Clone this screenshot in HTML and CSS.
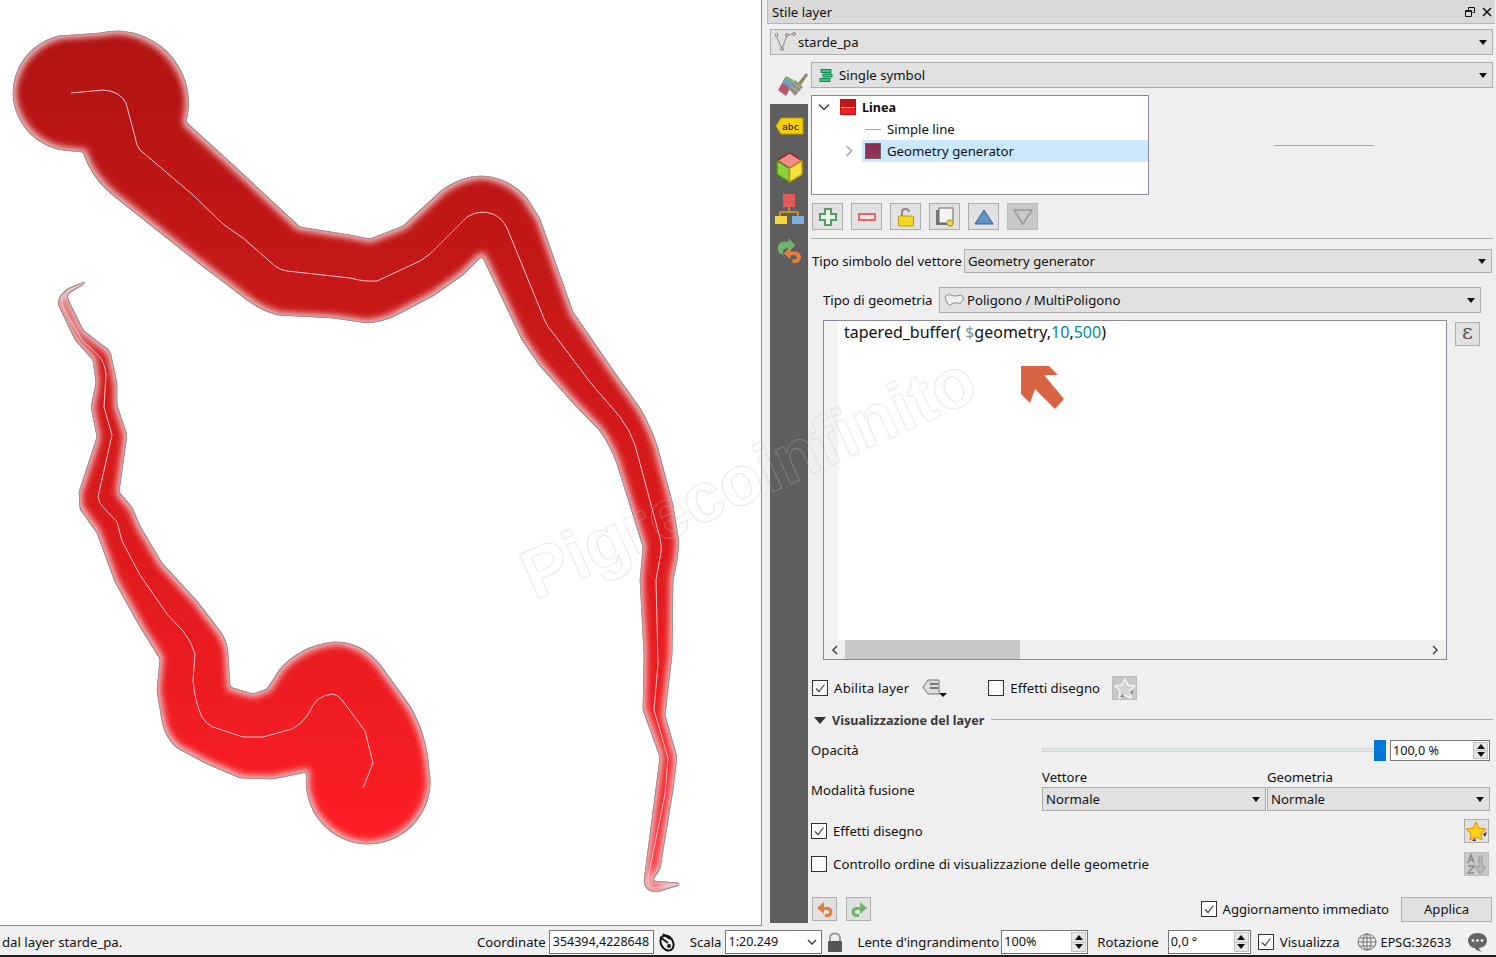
FILE: index.html
```html
<!DOCTYPE html>
<html>
<head>
    <meta charset="utf-8">
    <title>Stile layer</title>
    <link rel="stylesheet" href="styles.css">
</head>
<body>
    <div class="main">
        <div class="map">
            <svg class="mapCanvas" width="761" height="925" viewBox="0 0 761 925">
                <defs>
                    <linearGradient id="ramp" gradientUnits="userSpaceOnUse" x1="0" y1="33" x2="0" y2="846">
                        <stop offset="0" stop-color="#b21414"/>
                        <stop offset="0.33" stop-color="#c81919"/>
                        <stop offset="0.65" stop-color="#e01b1e"/>
                        <stop offset="1" stop-color="#ff1f26"/>
                    </linearGradient>
                    <filter id="feather" filterUnits="userSpaceOnUse" x="0" y="0" width="761" height="925" color-interpolation-filters="sRGB">
                        <feGaussianBlur in="SourceAlpha" stdDeviation="1.5" result="soft"/>
                        <feComponentTransfer in="soft" result="shape">
                            <feFuncA type="linear" slope="6" intercept="-1.8"/>
                        </feComponentTransfer>
                        <feFlood flood-color="#f2c0c2" result="pale"/>
                        <feComposite in="pale" in2="shape" operator="in" result="base"/>
                        <feMorphology in="SourceGraphic" operator="erode" radius="3" result="thin"/>
                        <feGaussianBlur in="thin" stdDeviation="3" result="coreSoft"/>
                        <feComposite in="coreSoft" in2="shape" operator="in" result="core"/>
                        <feMorphology in="shape" operator="erode" radius="0.7" result="inner"/>
                        <feFlood flood-color="#a98f92" result="gray"/>
                        <feComposite in="gray" in2="shape" operator="in" result="grayShape"/>
                        <feComposite in="grayShape" in2="inner" operator="out" result="edge"/>
                        <feMerge>
                            <feMergeNode in="base"/>
                            <feMergeNode in="core"/>
                            <feMergeNode in="edge"/>
                        </feMerge>
                    </filter>
                </defs>
                <path class="buffers" filter="url(#feather)" d="M72 151 A59 59 0 0 1 13 93 A59 59 0 0 1 58 36 L100 33 A72 72 0 0 1 186 122 L230 162 L273 202 L300 227 L350 235 L370 239 L403 226 L443 189 Q463 176 480 176 Q507 176 527 198 L540 219 L573 312 L613 370 L640 408 Q650 425 657 445 L673 505 L679 543 L677 561 L673 580 L672 655 L665 715 L677 757 L673 790 L660 869 L652 881 L680 883 L680 885 L657 892 Q645 892 644 881 L660 757 L643 710 L644 655 L640 580 L643 547 L633 515 L617 464 Q610 445 600 431 L573 403 L540 366 L522 340 L482 256 L463 275 L433 296 L393 317 Q380 322 367 323 L333 318 L277 315 Q260 310 247 300 L197 262 L110 193 Q90 175 83 152 Z
                    M86 281 L86 283 L69 293 L67 297 L83 330 L102 345 Q112 350 112 360 L117 383 L117 405 L127 435 L119 492 L132 507 L140 526 L162 563 L197 601 L217 627 Q228 640 228 654 L230 687 L253 694 L267 689 L280 669 Q300 646 333 642 Q365 640 387 674 L410 706 Q427 735 429 770 A62 62 0 1 1 307 772 L273 779 L240 778 L207 764 L177 748 Q165 738 162 721 L157 691 L160 659 L140 627 L115 582 L97 533 L80 509 L79 492 L97 437 L91 407 L96 383 L93 360 L75 340 L58 304 L60 296 L67 289 Z"/>
                <path class="road" d="M71 93 L103 90 Q120 91 126 103 L135 137 Q136 145 140 150 L193 195 L223 224 L243 238 L275 266 Q280 270 287 271 L350 278 Q365 282 377 281 L420 261 L430 254 L467 217 Q480 209 493 214 Q502 218 507 228 L545 321 Q548 328 553 333 L590 382 L620 417 Q630 430 635 445 L660 538 Q662 546 661 552 L656 580 L658 664 L654 710 L668 758 L665 794 L648 878 Q648 888 654 888 L680 884"/>
                <path class="road" d="M86 282 L68 291 Q60 296 62 300 Q62 306 65 311 L82 340 L98 355 Q105 362 106 375 L104 407 L112 435 L98 497 Q99 503 103 507 L117 522 L122 541 L140 575 L167 614 L183 631 Q192 642 195 654 L193 680 Q195 703 202 717 Q206 724 213 727 L243 737 L263 737 L292 729 Q300 725 307 716 Q312 706 317 700 Q325 694 333 694 Q338 695 342 700 L365 731 L373 763 L363 788"/>
            </svg>
        </div>

        <div class="panel">
            <div class="titleBar">
                <span>Stile layer</span>
                <span class="titleIcons">
                    <svg width="10" height="10" viewBox="0 0 10 10"><path d="M3.500 .5h6v5h-2M.5 3.500h6v6h-6z M3.500 .5v3M.5 4.500h6" class="blackLine"/></svg>
                    <svg width="10" height="10" viewBox="0 0 10 10"><path d="M1 1l8 8M9 1l-8 8" class="blackThick"/></svg>
                </span>
            </div>

            <div class="combo layerCombo">
                <svg class="comboIcon" width="21" height="20" viewBox="0 0 21 20"><path d="M1 3l6 14 5-14 7-1" class="grayLine"/><circle cx="1.500" cy="3" r="1.400" class="grayDot"/><circle cx="7" cy="17" r="1.400" class="grayDot"/><circle cx="12" cy="3" r="1.400" class="grayDot"/><circle cx="19" cy="2" r="1.400" class="grayDot"/></svg>
                starde_pa
            </div>

            <div class="body">
                <div class="side">
                    <div class="brushBox">
                        <svg width="32" height="26" viewBox="0 0 32 26">
                            <path d="M1 19L8 7l8 5-7 13z" fill="#b9586c"/>
                            <path d="M5 12l3-5 9 5-3 5z" fill="#6f9fcf"/>
                            <path d="M7 8l2-3 8 4-2 3z" fill="#79b56f"/>
                            <path d="M11 17l7-8 8 7-8 9z" fill="#8f9488"/>
                            <path d="M14 15l7 6M17 12l7 6" stroke="#b5b8ae"/>
                            <path d="M21 12l8-10 2 2-7 10z" fill="#8f8a5e"/>
                        </svg>
                    </div>
                    <div class="strip">
                        <svg class="tag" width="29" height="18" viewBox="0 0 29 18"><path d="M1 9l5-8h22v16H6z" fill="#f7d000" stroke="#b99b00"/><text x="7" y="13" class="abc">abc</text></svg>
                        <svg class="cube" width="29" height="31" viewBox="0 0 30 32"><path d="M15 1L28 9 15 17 2 9z" fill="#f08c8c" stroke="#a81818" stroke-width="1.500"/><path d="M2 9l13 8v14L2 23z" fill="#8fd13a" stroke="#4f8a18" stroke-width="1.500"/><path d="M28 9l-13 8v14l13-8z" fill="#f7df40" stroke="#b39a10" stroke-width="1.500"/></svg>
                        <svg class="tree" width="31" height="31" viewBox="0 0 31 31"><path d="M15 13v5M6 18h18M6 18v4M24 18v4" stroke="#c98a30" stroke-width="2" fill="none"/><rect x="9" y="0" width="12" height="13" fill="#e05a5a"/><path d="M1 22h12v8H1z" fill="#f4d83a"/><path d="M18 22h12v8H18z" fill="#7fb0e0"/></svg>
                        <svg class="swap" width="27" height="27" viewBox="0 0 28 28"><path d="M13 1v4H8C4 5 2 8 2 12s2 6 6 6c-1-2-1-6 2-6h3v4l7-7.500z" fill="#6fb36f"/><path d="M15 11v4h5c3 0 6 3 6 6s-3 6-6 6h-3v-4h3c2 0 2-4 0-4h-5v4l-7-6z" fill="#e67e3c"/></svg>
                    </div>
                </div>

                <div class="content">
                    <div class="combo rendererCombo">
                        <svg class="comboIcon" width="14" height="15" viewBox="0 0 14 15"><path d="M2 1.500h10v3H2zM4 6h9v3H4zM1 10.500h10v3H1z" fill="#4fbf8a" stroke="#0a8a50"/></svg>
                        Single symbol
                    </div>

                    <div class="symbolRow">
                        <div class="symbolTree">
                            <div class="treeRow">
                                <svg class="chevron chevronOne" width="12" height="8" viewBox="0 0 12 8"><path d="M1 1.500l5 5 5-5" class="darkLine"/></svg>
                                <span class="swatch swatchLine"></span>
                                <b>Linea</b>
                            </div>
                            <div class="treeRow treeChild">
                                <span class="miniLine"></span>
                                <span>Simple line</span>
                            </div>
                            <div class="treeRow treeGen">
                                <svg class="chevron chevronTwo" width="8" height="12" viewBox="0 0 8 12"><path d="M1.500 1l5 5-5 5" class="greyChevron"/></svg>
                                <div class="treeSelected">
                                    <span class="swatch swatchGen"></span>
                                    <span>Geometry generator</span>
                                </div>
                            </div>
                        </div>
                        <div class="preview"><span class="previewLine"></span></div>
                    </div>

                    <div class="toolRow">
                        <button class="tool wide">
                            <svg width="20" height="20" viewBox="0 0 20 20"><path d="M7 2h6v5h5v6h-5v5H7v-5H2V7h5z" fill="#e8f3e8" stroke="#5a9a63" stroke-width="2"/></svg>
                        </button>
                        <button class="tool wide">
                            <svg width="20" height="10" viewBox="0 0 20 10"><rect x="2" y="2" width="16" height="6" fill="#fbe2e2" stroke="#e2686c" stroke-width="2"/></svg>
                        </button>
                        <button class="tool wide">
                            <svg width="18" height="20" viewBox="0 0 18 20"><path d="M5 9V5c0-4 7-4 7 0" fill="none" stroke="#8a8a8a" stroke-width="2"/><rect x="1.500" y="9" width="15" height="10" rx="1" fill="#f1d71f" stroke="#b79a12"/></svg>
                        </button>
                        <button class="tool wide">
                            <svg width="20" height="20" viewBox="0 0 20 20"><rect x="1" y="3" width="13" height="15" fill="#777"/><rect x="4" y="1" width="14" height="15" fill="#f4f4f4" stroke="#6b6b6b"/><circle cx="15" cy="16" r="3.200" fill="#e8d24a" stroke="#a8922a"/></svg>
                        </button>
                        <button class="tool wide">
                            <svg width="20" height="16" viewBox="0 0 20 16"><path d="M10 1l9 14H1z" fill="#6594c9" stroke="#2f5f92"/></svg>
                        </button>
                        <button class="tool wide toolOff">
                            <svg width="20" height="16" viewBox="0 0 20 16"><path d="M1 1h18l-9 14z" fill="#c8c8c8" stroke="#9a9a9a" stroke-width="1.500"/></svg>
                        </button>
                    </div>

                    <hr class="rule">

                    <div class="typeRow">
                        <span class="typeLabel">Tipo simbolo del vettore</span>
                        <div class="combo typeCombo">Geometry generator</div>
                    </div>

                    <div class="geomRow">
                        <span class="geomLabel">Tipo di geometria</span>
                        <div class="combo geomCombo">
                            <svg class="polyIcon" width="21" height="14" viewBox="0 0 21 14"><path d="M2 3c3-3 5 0 9 0s7-2 8 1-1 5-3 6-3-1-6 0-5 3-6 1-4-5-2-8z" fill="#eee" stroke="#8a8a8a"/></svg>
                            Poligono / MultiPoligono
                        </div>
                    </div>

                    <div class="editorRow">
                        <div class="editor">
                            <div class="editorBody">
                                <div class="editorMargin"></div>
                                <div class="code">tapered_buffer( <span class="codeVar">$</span>geometry,<span class="codeNum">10</span>,<span class="codeNum">500</span>)</div>
                                <svg class="arrow" width="44" height="44" viewBox="0 0 44 44"><path d="M1 1H29L38 10H24L44 34L35 44L15 24L10 38L1 29Z" fill="#d96444"/></svg>
                            </div>
                            <div class="hScroll">
                                <svg class="scrollArrow" width="7" height="10" viewBox="0 0 7 10"><path d="M6 1L2 5l4 4" class="darkLine"/></svg>
                                <div class="thumb"></div>
                                <svg class="scrollArrow arrowRight" width="7" height="10" viewBox="0 0 7 10"><path d="M1 1l4 4-4 4" class="darkLine"/></svg>
                            </div>
                        </div>
                        <button class="tool small epsilon">&#949;</button>
                    </div>

                    <div class="layerRow">
                        <span class="check"><svg width="14" height="14" viewBox="0 0 14 14"><path d="M3 7.500l3 3 5.500-7" class="tick"/></svg></span>
                        <span class="checkLabel enableLabel">Abilita layer</span>
                        <svg class="legendIcon" width="26" height="20" viewBox="0 0 26 20"><path d="M6 2h11v14H6L1 9z" fill="#dcdcdc" stroke="#777"/><path d="M8 6h8M8 10h8" stroke="#555" stroke-width="1.500"/><path d="M17 15h8l-4 4z" fill="#111"/></svg>
                        <span class="check"></span>
                        <span class="checkLabel">Effetti disegno</span>
                        <button class="tool small toolOff starOff">
                            <svg width="22" height="22" viewBox="0 0 22 22"><path d="M11 2l3 6 7 1-5 5 1 7-6-3-6 3 1-7-5-5 7-1z" fill="#d4d4d4" stroke="#f5f5f5" stroke-width="1.500"/><path d="M16 15l3-2-1 5zM6 20l3-3 1 3z" fill="#777"/></svg>
                        </button>
                    </div>

                    <div class="groupHead">
                        <span class="groupArrow"></span>
                        <b>Visualizzazione del layer</b>
                        <span class="groupLine"></span>
                    </div>

                    <div class="opacityRow">
                        <span class="formLabel">Opacità</span>
                        <div class="slider">
                            <span class="track"></span>
                            <span class="handle"></span>
                        </div>
                        <div class="spin opacitySpin">
                            <span class="spinValue">100,0 %</span>
                            <span class="spinBtns"><i class="up"></i><i class="down"></i></span>
                        </div>
                    </div>

                    <div class="blendRow">
                        <span class="formLabel">Modalità fusione</span>
                        <div class="blendCol blendVector">
                            <span>Vettore</span>
                            <div class="combo blendCombo">Normale</div>
                        </div>
                        <div class="blendCol blendGeom">
                            <span>Geometria</span>
                            <div class="combo blendCombo">Normale</div>
                        </div>
                    </div>

                    <div class="effectRow">
                        <span class="check"><svg width="14" height="14" viewBox="0 0 14 14"><path d="M3 7.500l3 3 5.500-7" class="tick"/></svg></span>
                        <span class="checkLabel">Effetti disegno</span>
                        <button class="tool small pushRight">
                            <svg width="22" height="22" viewBox="0 0 22 22"><path d="M10 2l3 6 7 1-5 5 1 6-6-3-6 3 1-6-5-5 7-1z" fill="#fcd116" stroke="#e88a10"/><path d="M17 14l4-2-2 5zM6 21l3-3 1 3z" fill="#333"/></svg>
                        </button>
                    </div>

                    <div class="orderRow">
                        <span class="check"></span>
                        <span class="checkLabel">Controllo ordine di visualizzazione delle geometrie</span>
                        <button class="tool small toolOff pushRight">
                            <svg width="22" height="22" viewBox="0 0 22 22"><path d="M2 10l3-8 3 8M3 7h4M2 13h6l-6 7h6" fill="none" stroke="#8a8a8a" stroke-width="1.500"/><path d="M13 3h3v11h4l-5.500 7L9 14h4z" fill="#bdbdbd" stroke="#9a9a9a"/></svg>
                        </button>
                    </div>

                    <div class="footerRow">
                        <button class="tool small">
                            <svg width="18" height="18" viewBox="0 0 18 18"><path d="M8 2L1 8l7 6v-4h3c3 0 3 4 0 4H9v3h3c6 0 6-10 0-10H8z" fill="#e67e3c"/></svg>
                        </button>
                        <button class="tool small">
                            <svg width="18" height="18" viewBox="0 0 18 18"><path d="M10 2l7 6-7 6v-4H7c-3 0-3 4 0 4h2v3H6C0 17 0 7 6 7h4z" fill="#6fb36f"/></svg>
                        </button>
                        <span class="check pushRight"><svg width="14" height="14" viewBox="0 0 14 14"><path d="M3 7.500l3 3 5.500-7" class="tick"/></svg></span>
                        <span class="checkLabel">Aggiornamento immediato</span>
                        <button class="applyBtn">Applica</button>
                    </div>
                </div>
            </div>
        </div>
    </div>

    <div class="statusBar">
        <span class="statusMsg">dal layer starde_pa.</span>
        <span>Coordinate</span>
        <div class="statusInput coordInput">354394,4228648</div>
        <svg class="mouseIcon" width="20" height="20" viewBox="0 0 20 20"><ellipse cx="10" cy="11" rx="6" ry="8" fill="#eee" stroke="#111" stroke-width="2" transform="rotate(-30 10 11)"/><path d="M3 5l8 6M6 2l7 5" stroke="#111" stroke-width="2"/><circle cx="12" cy="14" r="2" fill="#111"/></svg>
        <span class="scalaLabel">Scala</span>
        <div class="statusInput scaleInput">1:20.249
            <svg class="scaleChevron" width="10" height="6" viewBox="0 0 10 6"><path d="M1 1l4 4 4-4" class="darkLine"/></svg>
        </div>
        <svg class="lockIcon" width="16" height="20" viewBox="0 0 16 20"><path d="M3 9V6c0-6 10-6 10 0v3" fill="none" stroke="#999" stroke-width="2"/><rect x="1" y="9" width="14" height="11" rx="1" fill="#555"/></svg>
        <span class="lensLabel">Lente d'ingrandimento</span>
        <div class="spin lensSpin">
            <span class="spinValue">100%</span>
            <span class="spinBtns"><i class="up"></i><i class="down"></i></span>
        </div>
        <span class="rotLabel">Rotazione</span>
        <div class="spin rotSpin">
            <span class="spinValue">0,0 °</span>
            <span class="spinBtns"><i class="up"></i><i class="down"></i></span>
        </div>
        <span class="check statusCheck"><svg width="14" height="14" viewBox="0 0 14 14"><path d="M3 7.500l3 3 5.500-7" class="tick"/></svg></span>
        <span class="checkLabel">Visualizza</span>
        <svg class="globeIcon" width="20" height="18" viewBox="0 0 20 18"><g fill="none" stroke="#6f6f6f"><ellipse cx="10" cy="9" rx="9" ry="8"/><ellipse cx="10" cy="9" rx="4" ry="8"/><path d="M1 9h18M2.500 5h15M2.500 13h15M10 1v16"/></g></svg>
        <span class="epsgLabel">EPSG:32633</span>
        <svg class="chatIcon" width="21" height="20" viewBox="0 0 21 20"><path d="M10.500 1C16 1 20 4 20 8.500S16 16 12 16c0 1 1 2.500 3 3.500-3 0-6-1.500-7.500-3.500C4 15.500 1 12.500 1 8.500S5 1 10.500 1z" fill="#666"/><circle cx="6" cy="8.500" r="1.300" fill="#fff"/><circle cx="10.500" cy="8.500" r="1.300" fill="#fff"/><circle cx="15" cy="8.500" r="1.300" fill="#fff"/></svg>
    </div>

    <div class="watermark">Pigrecoinfinito</div>
</body>
</html>
```

FILE: styles.css
```css
* {
    box-sizing: border-box;
}

html, body {
    margin: 0;
    padding: 0;
}

body {
    width: 1496px;
    height: 957px;
    overflow: hidden;
    position: relative;
    background-color: #f0f0f0;
    font-family: "Noto Sans", "Open Sans", sans-serif;
    font-size: 13.200px;
    color: #111;
}

b {
    font-size: 12.600px;
}

svg {
    display: block;
    flex: none;
}

button {
    font-family: inherit;
    font-size: inherit;
    color: inherit;
    padding: 0;
}

.main {
    display: flex;
    height: 926px;
}

/* map canvas */
.map {
    width: 762px;
    height: 926px;
    flex: none;
    background-color: white;
    border-right: 1px solid #8a8a92;
    border-bottom: 1px solid #8a8a92;
}

.buffers {
    fill: url(#ramp);
}

.road {
    fill: none;
    stroke: #f8c6cc;
    stroke-width: 1;
    stroke-linejoin: round;
}

/* right panel */
.panel {
    flex: 1;
    display: flex;
    flex-direction: column;
    background-color: #efefef;
    min-width: 0;
}

.titleBar {
    height: 24px;
    flex: none;
    margin: 0 1px 0 5px;
    padding: 0 3px 0 4px;
    background-color: #d9d9d9;
    border-left: 1px solid #bdbdbd;
    border-bottom: 1px solid #b5b5b5;
    display: flex;
    align-items: center;
    justify-content: space-between;
}

.titleIcons {
    display: flex;
    gap: 7px;
}

.blackLine {
    fill: none;
    stroke: #111;
}

.blackThick {
    fill: none;
    stroke: #111;
    stroke-width: 1.600;
}

.grayLine {
    fill: none;
    stroke: #8a8a8a;
}

.grayDot {
    fill: #eee;
    stroke: #777;
}

.darkLine {
    fill: none;
    stroke: #444;
    stroke-width: 1.500;
}

.greyChevron {
    fill: none;
    stroke: #a8a8a8;
    stroke-width: 1.600;
}

.combo {
    position: relative;
    display: flex;
    align-items: center;
    background-color: #e1e1e1;
    border: 1px solid #adadad;
    padding-left: 3px;
}

.combo::after {
    content: "";
    position: absolute;
    right: 5px;
    top: 50%;
    margin-top: -2px;
    border-left: 4px solid transparent;
    border-right: 4px solid transparent;
    border-top: 5px solid #111;
}

.layerCombo {
    height: 26px;
    flex: none;
    margin: 5px 3px 0 8px;
    padding-left: 4px;
}

.comboIcon {
    margin-right: 2px;
}

.body {
    flex: 1;
    display: flex;
    margin: 7px 0 3px 8px;
    min-height: 0;
}

.side {
    width: 38px;
    flex: none;
    display: flex;
    flex-direction: column;
}

.brushBox {
    height: 42px;
    flex: none;
    padding: 9px 0 0 7px;
}

.strip {
    flex: 1;
    background-color: #5e5e5e;
    padding: 13px 0 0 4px;
}

.abc {
    font-family: "DejaVu Sans Mono", monospace;
    font-size: 9.500px;
    fill: #000;
}

.tag {
    margin-left: 1px;
}

.cube {
    margin: 17px 0 0 1px;
}

.tree {
    margin: 11px 0 0 0;
}

.swap {
    margin: 12px 0 0 2px;
}

.content {
    flex: 1;
    min-width: 0;
    margin: 0 3px;
    display: flex;
    flex-direction: column;
}

.rendererCombo {
    height: 26px;
    flex: none;
    padding-left: 7px;
}

.rendererCombo .comboIcon {
    margin-right: 6px;
}

.symbolRow {
    display: flex;
    height: 100px;
    flex: none;
    margin-top: 7px;
}

.symbolTree {
    width: 338px;
    flex: none;
    background-color: white;
    border: 1px solid #8a8a9a;
}

.preview {
    flex: 1;
    display: flex;
    align-items: center;
    justify-content: center;
}

.previewLine {
    display: block;
    width: 100px;
    height: 1px;
    margin-left: 6px;
    background-color: #ee8aa4;
}

.treeRow {
    height: 22px;
    display: flex;
    align-items: center;
}

.chevronOne {
    margin-left: 6px;
    margin-right: 10px;
}

.chevronTwo {
    margin-left: 33px;
    margin-right: 9px;
}

.swatch {
    display: block;
    width: 16px;
    height: 16px;
    flex: none;
    border: 1px solid #777;
}

.swatchLine {
    background: linear-gradient(#c41414 0 48%, #f4c4c4 48% 54%, #ee2020 54%);
    border-color: #c41414;
    margin-right: 6px;
}

.swatchGen {
    background: linear-gradient(#8a2c50, #96365a);
    border-color: #666;
    margin: 0 6px 0 3px;
}

.treeChild {
    padding-left: 53px;
}

.miniLine {
    display: block;
    width: 16px;
    height: 1px;
    background-color: #ee8aa4;
    margin-right: 6px;
}

.treeSelected {
    flex: 1;
    height: 22px;
    display: flex;
    align-items: center;
    background-color: #cce8ff;
}

.toolRow {
    display: flex;
    gap: 8px;
    height: 27px;
    flex: none;
    margin: 8px 0 0 1px;
}

.tool {
    display: flex;
    align-items: center;
    justify-content: center;
    background-color: #e1e1e1;
    border: 1px solid #adadad;
    border-radius: 0;
    flex: none;
}

.wide {
    width: 31px;
    height: 27px;
}

.small {
    width: 25px;
    height: 24px;
}

.toolOff {
    background-color: #c8c8c8;
    border-color: #bdbdbd;
}

.rule {
    margin: 8px 0 0 0;
    border: 0;
    border-top: 1px solid #adadad;
    flex: none;
}

.typeRow {
    display: flex;
    align-items: center;
    height: 24px;
    flex: none;
    margin-top: 10px;
    padding-left: 1px;
}

.typeLabel {
    width: 152px;
    flex: none;
    white-space: nowrap;
}

.typeCombo {
    flex: 1;
    height: 24px;
    margin-right: 1px;
}

.geomRow {
    display: flex;
    align-items: center;
    height: 26px;
    flex: none;
    margin-top: 14px;
    padding-left: 12px;
}

.geomLabel {
    width: 116px;
    flex: none;
    white-space: nowrap;
}

.geomCombo {
    flex: 1;
    height: 26px;
    margin-right: 12px;
    padding-left: 4px;
}

.polyIcon {
    margin-right: 2px;
}

.editorRow {
    display: flex;
    height: 340px;
    flex: none;
    margin-top: 7px;
    padding-left: 12px;
}

.editor {
    width: 624px;
    flex: none;
    display: flex;
    flex-direction: column;
    border: 1px solid #8a8a9a;
    background-color: white;
}

.editorBody {
    flex: 1;
    display: flex;
    position: relative;
    min-height: 0;
}

.editorMargin {
    width: 14px;
    flex: none;
    background-color: #f3f3f3;
}

.code {
    margin-left: 6px;
    font-size: 16px;
    line-height: 22px;
    color: #111;
    white-space: pre;
}

.codeVar {
    color: #7f9a9a;
}

.codeNum {
    color: #008a94;
}

.arrow {
    position: absolute;
    left: 196px;
    top: 44px;
}

.hScroll {
    height: 19px;
    flex: none;
    background-color: #efefef;
    display: flex;
    align-items: center;
    padding-left: 7px;
}

.thumb {
    width: 175px;
    height: 19px;
    margin-left: 7px;
    background-color: #c8c8c8;
}

.arrowRight {
    margin-left: auto;
    margin-right: 7px;
}

.epsilon {
    margin: 2px 0 0 8px;
    padding-bottom: 4px;
    font-family: "DejaVu Serif", serif;
    font-size: 21px;
    color: #555;
    line-height: 1;
}

.layerRow {
    display: flex;
    align-items: center;
    height: 24px;
    flex: none;
    margin-top: 16px;
    padding-left: 1px;
}

.check {
    display: block;
    width: 16px;
    height: 16px;
    flex: none;
    background-color: white;
    border: 1px solid #333;
}

.tick {
    fill: none;
    stroke: #444;
    stroke-width: 1.200;
}

.checkLabel {
    margin-left: 6px;
    white-space: nowrap;
}

.enableLabel {
    letter-spacing: 0.200px;
}

.orderRow .checkLabel {
    letter-spacing: 0.080px;
}

.legendIcon {
    margin: 0 40px 0 13px;
}

.starOff {
    margin-left: 12px;
}

.groupHead {
    display: flex;
    align-items: center;
    height: 18px;
    flex: none;
    margin-top: 11px;
    padding-left: 3px;
    color: #3a3a3a;
}

.groupArrow {
    display: block;
    border-left: 6px solid transparent;
    border-right: 6px solid transparent;
    border-top: 7px solid #333;
    margin-right: 6px;
}

.groupLine {
    flex: 1;
    height: 1px;
    margin: 0 0 2px 7px;
    background-color: #adadad;
}

.opacityRow {
    display: flex;
    align-items: center;
    height: 22px;
    flex: none;
    margin-top: 10px;
}

.formLabel {
    width: 231px;
    flex: none;
}

.slider {
    flex: 1;
    display: flex;
    align-items: center;
}

.track {
    flex: 1;
    height: 4px;
    background-color: #e2e6e2;
    border: 1px solid #d4d8d4;
}

.handle {
    display: block;
    width: 12px;
    height: 21px;
    margin-left: -6px;
    background-color: #0078d7;
}

.spin {
    display: flex;
    background-color: white;
    border: 1px solid #777;
    flex: none;
}

.spinValue {
    flex: 1;
    padding-left: 2px;
    line-height: 19px;
    font-size: 12.600px;
}

.spinBtns {
    width: 15px;
    flex: none;
    display: flex;
    flex-direction: column;
    background-color: #e6e6e6;
    border: 1px solid #c4c4c4;
    margin: 1px;
}

.spinBtns i {
    flex: 1;
    display: flex;
    align-items: center;
    justify-content: center;
}

.spinBtns i::after {
    content: "";
    border-left: 4px solid transparent;
    border-right: 4px solid transparent;
}

.up::after {
    border-bottom: 5px solid #111;
}

.down {
    border-top: 1px solid #c4c4c4;
}

.down::after {
    border-top: 5px solid #111;
}

.opacitySpin {
    width: 100px;
    height: 21px;
    margin: 0 3px 0 4px;
}

.blendRow {
    display: flex;
    align-items: center;
    height: 42px;
    flex: none;
    margin-top: 8px;
}

.blendCol {
    display: flex;
    flex-direction: column;
    height: 42px;
    justify-content: space-between;
    flex: none;
    line-height: 16px;
}

.blendVector {
    width: 224px;
    margin-right: 1px;
}

.blendGeom {
    width: 223px;
}

.blendCombo {
    height: 24px;
    flex: none;
}

.effectRow {
    display: flex;
    align-items: center;
    height: 24px;
    flex: none;
    margin-top: 8px;
    padding-right: 4px;
}

.orderRow {
    display: flex;
    align-items: center;
    height: 24px;
    flex: none;
    margin-top: 9px;
    padding-right: 4px;
}

.pushRight {
    margin-left: auto;
}

.footerRow {
    display: flex;
    align-items: center;
    gap: 9px;
    margin-top: auto;
    padding: 0 1px 1px 1px;
    height: 27px;
    flex: none;
}

.footerRow .checkLabel {
    margin-left: -3px;
    letter-spacing: -0.080px;
}

.applyBtn {
    width: 91px;
    height: 25px;
    margin-left: 3px;
    background-color: #e1e1e1;
    border: 1px solid #adadad;
}

/* status bar */
.statusBar {
    height: 31px;
    display: flex;
    align-items: center;
    white-space: nowrap;
    padding: 3px 0 0 2px;
    border-bottom: 2px solid #1f1f1f;
    background-color: #f0f0f0;
}

.statusMsg {
    width: 475px;
    flex: none;
}

.statusInput {
    height: 24px;
    line-height: 22px;
    background-color: white;
    border: 1px solid #777;
    padding-left: 3px;
    flex: none;
    font-size: 12.500px;
}

.coordInput {
    width: 105px;
    margin-left: 3px;
}

.mouseIcon {
    margin-left: 3px;
}

.scalaLabel {
    margin-left: 13px;
}

.scaleInput {
    width: 97px;
    margin-left: 3px;
    position: relative;
}

.scaleChevron {
    position: absolute;
    right: 4px;
    top: 8px;
}

.lockIcon {
    margin-left: 5px;
}

.lensLabel {
    margin-left: 15px;
}

.lensSpin {
    width: 87px;
    height: 24px;
    margin-left: 2px;
}

.lensSpin .spinValue,
.rotSpin .spinValue {
    line-height: 22px;
}

.rotLabel {
    margin-left: 9px;
}

.rotSpin {
    width: 83px;
    height: 24px;
    margin-left: 9px;
}

.statusCheck {
    margin-left: 7px;
}

.globeIcon {
    margin-left: 17px;
}

.epsgLabel {
    margin-left: 4px;
    font-size: 12.700px;
}

.chatIcon {
    margin-left: 16px;
}

/* watermark over the whole window */
.watermark {
    position: absolute;
    left: 503px;
    top: 437px;
    font-family: "Liberation Sans", sans-serif;
    font-weight: bold;
    font-size: 70px;
    line-height: 80px;
    color: transparent;
    -webkit-text-stroke: 1px rgba(190, 190, 190, 0.35);
    transform: rotate(-24.500deg);
    pointer-events: none;
    white-space: nowrap;
}
```
